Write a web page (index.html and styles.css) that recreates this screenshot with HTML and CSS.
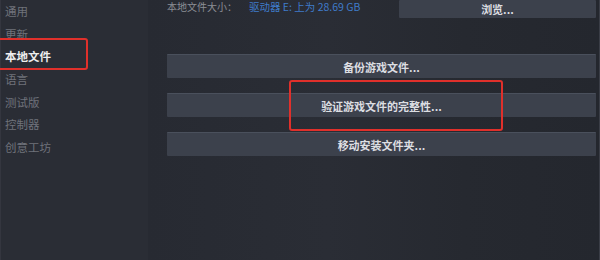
FILE: index.html
```html
<!DOCTYPE html>
<html lang="zh-CN">
<head>
<meta charset="utf-8">
<title>属性 - 本地文件</title>
<link rel="stylesheet" href="styles.css">
</head>
<body>
<div class="window">
  <nav class="sidebar">
    <div class="nav-item">通用</div>
    <div class="nav-item">更新</div>
    <div class="nav-item active">本地文件</div>
    <div class="nav-item">语言</div>
    <div class="nav-item">测试版</div>
    <div class="nav-item">控制器</div>
    <div class="nav-item">创意工坊</div>
  </nav>
  <main class="content">
    <div class="size-row">
      <span class="size-label">本地文件大小：</span>
      <span class="size-value">驱动器 E: 上为 28.69 GB</span>
      <button class="btn browse">浏览...</button>
    </div>
    <div class="actions">
      <button class="btn action">备份游戏文件...</button>
      <button class="btn action">验证游戏文件的完整性...</button>
      <button class="btn action">移动安装文件夹...</button>
    </div>
  </main>
  <div class="highlight hl-nav"></div>
  <div class="highlight hl-verify"></div>
</div>
</body>
</html>
```

FILE: styles.css
```css
* { box-sizing: border-box; }
html, body {
  margin: 0;
  padding: 0;
  width: 600px;
  height: 260px;
  overflow: hidden;
  background: #25282f;
  font-family: "Noto Sans CJK SC", "Noto Sans", "Liberation Sans", sans-serif;
}
.window {
  position: relative;
  display: flex;
  width: 600px;
  height: 260px;
}
.sidebar {
  width: 148px;
  flex: none;
  background: #2a2d35;
  padding: 0 0 0 4px;
  border-left: 1px solid #34363f;
}
.nav-item {
  height: 22.7px;
  line-height: 22.7px;
  font-size: 11.5px;
  color: #6f727b;
  white-space: nowrap;
}
.nav-item.active {
  color: #eeeeee;
  font-weight: 700;
}
.content {
  flex: 1;
  padding: 0 3px 0 19px;
  background: linear-gradient(90deg, #272a32 0%, #2a2d35 40%, #262930 70%, #24272e 100%);
  border-right: 1px solid #3a3d46;
}
.size-row {
  display: flex;
  align-items: flex-start;
  height: 18px;
}
.size-label {
  font-size: 10px;
  line-height: 14px;
  color: #8b8e95;
  white-space: nowrap;
}
.size-value {
  margin-left: 12px;
  font-size: 10.5px;
  line-height: 14px;
  color: #3f7bc9;
  white-space: nowrap;
}
.btn {
  font-family: inherit;
  border: none;
  border-top: 1px solid #4a505c;
  background: #3c414c;
  color: #dcdee2;
  font-size: 11px;
  font-weight: 700;
  padding: 0;
  border-radius: 1px;
}
.browse {
  margin-left: auto;
  width: 197px;
  height: 18px;
  border-top: none;
  line-height: 16px;
}
.actions {
  display: flex;
  flex-direction: column;
  gap: 15px;
  margin-top: 36px;
}
.action {
  height: 24px;
  width: 100%;
}
.highlight {
  position: absolute;
  border: 2px solid #e0302b;
  border-radius: 3px;
  pointer-events: none;
}
.hl-nav {
  left: -3px;
  top: 38px;
  width: 91px;
  height: 32px;
}
.hl-verify {
  left: 289px;
  top: 80px;
  width: 214px;
  height: 51px;
}
```
